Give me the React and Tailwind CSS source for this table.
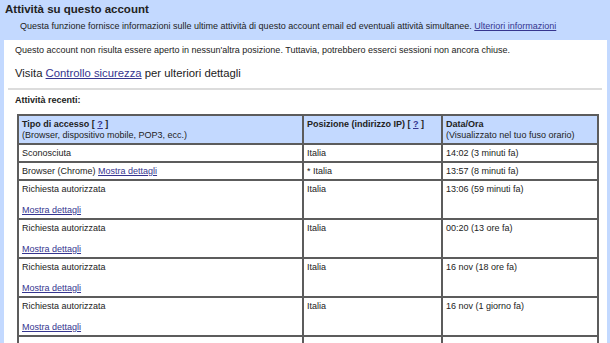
import React from "react";

const rows = [
  { a: "Sconosciuta", b: "Italia", c: "14:02 (3 minuti fa)" },
  { a: "Browser (Chrome)", inlineLink: true, b: "* Italia", c: "13:57 (8 minuti fa)" },
  { a: "Richiesta autorizzata", link: true, b: "Italia", c: "13:06 (59 minuti fa)" },
  { a: "Richiesta autorizzata", link: true, b: "Italia", c: "00:20 (13 ore fa)" },
  { a: "Richiesta autorizzata", link: true, b: "Italia", c: "16 nov (18 ore fa)" },
  { a: "Richiesta autorizzata", link: true, b: "Italia", c: "16 nov (1 giorno fa)" },
];

function Link({ children }) {
  return <a className="text-[#35358f] underline cursor-pointer">{children}</a>;
}

export default function App() {
  const base = "border-r-2 border-b-2 border-[#5c5c5c] pl-[3px] pr-[3px] leading-[10.5px]";
  const cell = `${base} py-[2.75px]`;
  const head = `${base} py-[3px] bg-[#c3d9ff]`;
  return (
    <div className="w-[610px] h-[343px] overflow-hidden bg-[#c3d9ff] text-[#222] font-['Liberation_Sans',Arial,sans-serif]">
      <div className="h-[40px] pl-[5px] pt-[2px]">
        <div className="font-bold text-[11.5px] leading-[14px]">Attività su questo account</div>
        <div className="pl-[15px] mt-[4px] text-[9px] leading-[12px]">
          Questa funzione fornisce informazioni sulle ultime attività di questo account email ed eventuali attività simultanee.{" "}
          <Link>Ulteriori informazioni</Link>
        </div>
      </div>
      <div className="ml-[4px] mr-[3px] bg-white h-[303px] pt-[4px]">
        <div className="pl-[11px] text-[9px] leading-[12px]">
          Questo account non risulta essere aperto in nessun'altra posizione. Tuttavia, potrebbero esserci sessioni non ancora chiuse.
        </div>
        <div className="pl-[11px] mt-[10px] text-[11.3px] leading-[14px]">
          Visita <Link>Controllo sicurezza</Link> per ulteriori dettagli
        </div>
        <div className="ml-[4px] mr-[5px] mt-[8px] h-[2px] bg-[#dcdcdc]" />
        <div className="pl-[11px] mt-[4px] font-bold text-[9px] leading-[12px]">Attività recenti:</div>
        <div className="ml-[13px] mt-[8px] w-[582px] grid grid-cols-[285px_139px_156px] border-l-2 border-t-2 border-[#5c5c5c] text-[9px]">
          <div className={head}>
            <div className="font-bold">
              Tipo di accesso [ <Link>?</Link> ]
            </div>
            <div>(Browser, dispositivo mobile, POP3, ecc.)</div>
          </div>
          <div className={`${head} font-bold`}>
            Posizione (indirizzo IP) [ <Link>?</Link> ]
          </div>
          <div className={head}>
            <div className="font-bold">Data/Ora</div>
            <div>(Visualizzato nel tuo fuso orario)</div>
          </div>
          {rows.map((r, i) => (
            <React.Fragment key={i}>
              <div className={cell}>
                {r.a}
                {r.inlineLink && (
                  <>
                    {" "}
                    <Link>Mostra dettagli</Link>
                  </>
                )}
                {r.link && (
                  <>
                    <div className="h-[10.5px]" />
                    <div>
                      <Link>Mostra dettagli</Link>
                    </div>
                  </>
                )}
              </div>
              <div className={cell}>{r.b}</div>
              <div className={cell}>{r.c}</div>
            </React.Fragment>
          ))}
          <div className={`${cell} h-[39px]`} />
          <div className={`${cell} h-[39px]`} />
          <div className={`${cell} h-[39px]`} />
        </div>
      </div>
    </div>
  );
}
